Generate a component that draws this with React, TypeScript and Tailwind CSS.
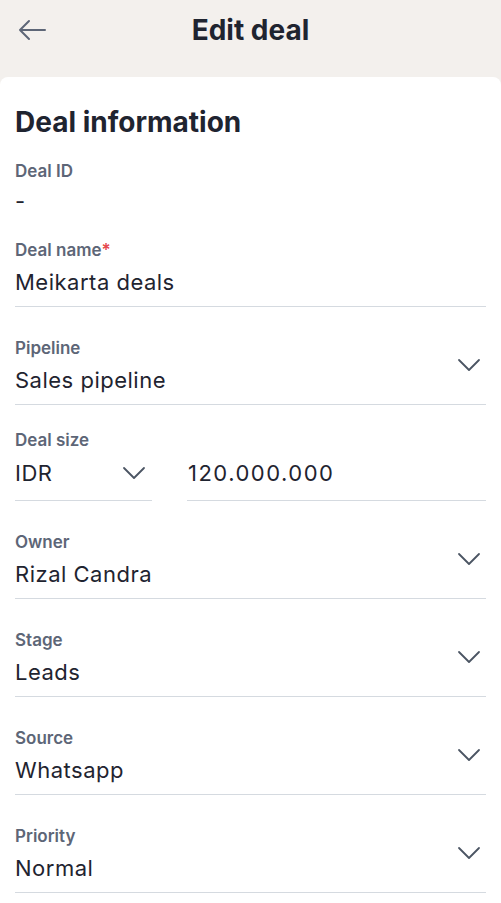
import React from 'react';

const font = { fontFamily: 'Inter, "Noto Sans", sans-serif' };

function Chevron({ className = '' }: { className?: string }) {
  return (
    <svg width="24" height="14" viewBox="0 0 24 14" fill="none" className={className}>
      <path d="M2 2l10 10 10-10" stroke="#4b5563" strokeWidth="1.8" strokeLinecap="round" strokeLinejoin="round" />
    </svg>
  );
}

interface FieldProps {
  label: string;
  value: string;
  required?: boolean;
  select?: boolean;
  last?: string;
}

function Field({ label, value, required, select, last = 'mb-[31px]' }: FieldProps) {
  return (
    <div className={`flex items-center border-b border-[#d5dae0] pb-[10px] ${last}`}>
      <div className="flex-1 min-w-0">
        <div className="text-[17px] leading-5 font-semibold text-[#5d6677]">
          {label}
          {required && <span className="text-[#e5484d]">*</span>}
        </div>
        <div className="mt-[8px] text-[22px] leading-7 tracking-[0.5px] text-[#1f2430]">{value}</div>
      </div>
      {select && <Chevron className="mr-[5px] mt-[-2px]" />}
    </div>
  );
}

export default function App() {
  return (
    <div className="w-[501px] h-[903px] overflow-hidden bg-[#f3f0ed]" style={font}>
      <header className="h-[77px] flex items-start pt-[12px] px-[17px] relative">
        <button className="w-[30px] h-[36px] flex items-center">
          <svg width="30" height="22" viewBox="0 0 30 22" fill="none">
            <path d="M28 11H3M12 2L3 11l9 9" stroke="#5d6677" strokeWidth="2" strokeLinecap="round" strokeLinejoin="round" />
          </svg>
        </button>
        <h1 className="absolute left-0 right-0 top-[12px] text-center text-[28px] leading-9 font-bold text-[#1f2430]">
          Edit deal
        </h1>
      </header>

      <main className="bg-white rounded-t-[8px] px-[15px] pt-[27px] min-h-[826px]">
        <h2 className="text-[28px] leading-9 font-bold text-[#1f2430]">Deal information</h2>

        <div className="mt-[21px] mb-[25px]">
          <div className="text-[17px] leading-5 font-semibold text-[#5d6677]">Deal ID</div>
          <div className="mt-[6px] text-[22px] leading-7 text-[#1f2430]">-</div>
        </div>

        <Field label="Deal name" value="Meikarta deals" required />
        <Field label="Pipeline" value="Sales pipeline" select last="mb-[25px]" />

        <div className="mb-[31px]">
          <div className="text-[17px] leading-5 font-semibold text-[#5d6677]">Deal size</div>
          <div className="mt-[9px] flex gap-[35px]">
            <div className="w-[137px] flex items-center justify-between border-b border-[#d5dae0] pb-[13px]">
              <span className="text-[22px] leading-7 tracking-[0.5px] text-[#1f2430]">IDR</span>
              <Chevron className="mr-[6px]" />
            </div>
            <div className="flex-1 border-b border-[#d5dae0] pb-[13px] pl-px">
              <span className="text-[22px] leading-7 tracking-[1.5px] text-[#1f2430]">120.000.000</span>
            </div>
          </div>
        </div>

        <Field label="Owner" value="Rizal Candra" select />
        <Field label="Stage" value="Leads" select />
        <Field label="Source" value="Whatsapp" select />
        <Field label="Priority" value="Normal" select />
      </main>
    </div>
  );
}
